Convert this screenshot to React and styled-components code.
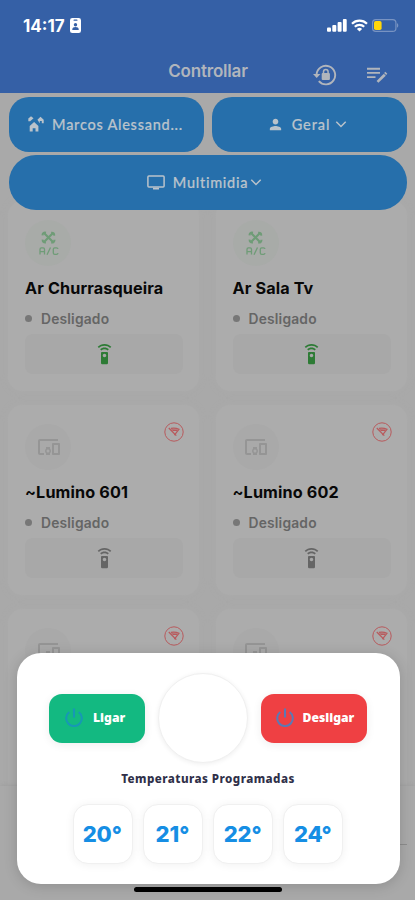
import React from 'react';
import styled, { createGlobalStyle } from 'styled-components';
import { MdDevicesOther, MdPerson, MdSettingsRemote } from 'react-icons/md';

const GlobalStyle = createGlobalStyle`
  * {
    box-sizing: border-box;
  }

  body {
    margin: 0;
    font-family: Inter, 'Liberation Sans', sans-serif;
    background-color: #a7a7a7;
  }
`;

const Screen = styled.div`
  position: relative;
  display: flex;
  flex-direction: column;
  width: 415px;
  height: 900px;
  overflow: hidden;
  background-color: #a9a9a9;
`;

const Header = styled.header`
  flex: none;
  height: 92.5px;
  background-color: #3560a6;
`;

const StatusBar = styled.div`
  display: flex;
  align-items: center;
  justify-content: space-between;
  height: 50px;
  padding: 1px 16px 0 23px;
  color: #ffffff;
`;

const Clock = styled.div`
  display: flex;
  align-items: center;
  gap: 5px;
  font-size: 17px;
  font-weight: 700;
  letter-spacing: 0;
`;

const StatusIcons = styled.div`
  display: flex;
  align-items: center;
  gap: 4px;
`;

const NavBar = styled.div`
  display: grid;
  grid-template-columns: 1fr auto 1fr;
  align-items: center;
  height: 42px;
  padding: 0 27px 0 28px;
  color: #b1b5bc;
`;

const Title = styled.h1`
  grid-column: 2;
  margin: 0;
  font-size: 17px;
  font-weight: 600;
  letter-spacing: -0.2px;
  line-height: 20px;
`;

const NavActions = styled.div`
  display: flex;
  align-items: center;
  justify-content: flex-end;
  gap: 29px;
  padding-top: 8px;
`;

const Filters = styled.div`
  position: relative;
  z-index: 1;
  flex: none;
  display: grid;
  grid-template-columns: 195px 195px;
  gap: 3.5px 8px;
  padding: 4.5px 8px 0 9px;
`;

const Pill = styled.button`
  display: flex;
  grid-column: ${({ $wide }) => ($wide ? '1 / -1' : 'auto')};
  align-items: center;
  justify-content: center;
  height: 54.5px;
  padding: 0 ${({ $shift }) => $shift || 0}px 0 0;
  border: none;
  border-radius: ${({ $wide }) => ($wide ? '27px' : '20px')};
  background-color: #266fab;
  color: #bac3cb;
  font-family: Lato, Inter, sans-serif;
  font-size: 14.5px;
  font-weight: 500;
  -webkit-text-stroke: 0.2px #bac3cb;
`;

const PillText = styled.span`
  margin: 0 ${({ $after }) => $after || 0}px 0 8px;
  letter-spacing: ${({ $spacing }) => $spacing || 0}px;
`;

const Grid = styled.main`
  display: grid;
  grid-template-columns: 191px 191px;
  grid-auto-rows: 190px;
  gap: 14px 16.5px;
  margin-top: -9px;
  padding: 0 8px;
`;

const Card = styled.section`
  padding: 20px 15px 0 17px;
  border-radius: 14px;
  background-color: #acacac;
  box-shadow: 0 0 7px #aaaaaa;
`;

const CardTop = styled.div`
  display: flex;
  align-items: flex-start;
  justify-content: space-between;
  height: 57.5px;
`;

const DeviceIcon = styled.div`
  display: flex;
  align-items: center;
  justify-content: center;
  width: 46px;
  height: 46px;
  margin-top: -1px;
  padding-left: 1.5px;
  border-radius: 50%;
  background-color: ${({ $active }) => ($active ? '#a8aba8' : '#a9a9a9')};
  color: #959595;
`;

const OfflineBadge = styled.div`
  display: flex;
  margin: -3px 0 0;
`;

const CardTitle = styled.h2`
  margin: 0;
  color: #080808;
  font-size: 16.2px;
  font-weight: 700;
  letter-spacing: 0.13px;
  line-height: 20px;
  white-space: nowrap;
`;

const Status = styled.div`
  display: flex;
  align-items: center;
  gap: 9px;
  height: 20px;
  margin-top: 10.5px;
  color: #656565;
  font-size: 13.8px;
  font-weight: 600;
  letter-spacing: 0.2px;
`;

const Dot = styled.i`
  width: 7px;
  height: 7px;
  border-radius: 50%;
  background-color: #777777;
`;

const RemoteButton = styled.button`
  display: flex;
  align-items: center;
  justify-content: center;
  width: 158px;
  height: 40px;
  margin-top: 5.5px;
  padding: 0;
  border: none;
  border-radius: 8px;
  background-color: #a8a8a8;
  color: ${({ $active }) => ($active ? '#2d7b35' : '#656565')};
`;

const TabBar = styled.footer`
  position: absolute;
  right: 0;
  bottom: 0;
  left: 0;
  display: flex;
  align-items: flex-start;
  justify-content: flex-end;
  height: 114px;
  padding: 58px 8px 0;
  background-color: #a9a9a9;
  box-shadow: 0 -1px 4px #9f9f9f;
`;

const TabMark = styled.i`
  width: 12px;
  height: 1px;
  background-color: #8d8d8d;
`;

const Sheet = styled.div`
  position: absolute;
  z-index: 2;
  right: 15.5px;
  bottom: 16px;
  left: 16.5px;
  height: 231px;
  padding-top: 20px;
  border-radius: 24px;
  background-color: #ffffff;
  box-shadow: 0 2px 14px rgba(0, 0, 0, 0.16);
`;

const PowerRow = styled.div`
  display: flex;
  align-items: center;
  gap: 13px;
  padding-left: 32.5px;
`;

const PowerButton = styled.button`
  display: flex;
  align-items: center;
  width: ${({ $width }) => $width}px;
  height: 49px;
  gap: ${({ $gap }) => $gap}px;
  padding: 0 0 1px 15.5px;
  border: none;
  border-radius: 13px;
  background-color: ${({ $color }) => $color};
  box-shadow: 0 2px 10px rgba(0, 0, 0, 0.07);
  color: #ffffff;
  font-family: 'Noto Sans', sans-serif;
  font-size: 12.2px;
  font-weight: 900;

  svg {
    color: ${({ $iconColor }) => $iconColor};
  }
`;

const Dial = styled.div`
  width: 90px;
  height: 90px;
  border: 1px solid #f0f0f0;
  border-radius: 50%;
  background-color: #ffffff;
  box-shadow: 0 1px 5px rgba(0, 0, 0, 0.07);
`;

const SheetLabel = styled.h3`
  margin: 8px 0 0;
  color: #303049;
  font-family: 'Noto Sans', sans-serif;
  font-size: 11.6px;
  font-weight: 800;
  letter-spacing: 0.45px;
  line-height: 16px;
  text-align: center;
`;

const Temperatures = styled.div`
  display: flex;
  justify-content: center;
  gap: 10.5px;
  margin-top: 17px;
`;

const Temperature = styled.button`
  width: 59.7px;
  height: 60px;
  padding: 0 1px 1px 0;
  border: 1px solid #f0f0f0;
  border-radius: 15px;
  background-color: #ffffff;
  box-shadow: 0 1px 10px rgba(0, 0, 0, 0.06);
  color: #168ee4;
  font-family: Inter, sans-serif;
  font-size: 22px;
  font-weight: 800;
  letter-spacing: -0.1px;
`;

const HomeIndicator = styled.div`
  position: absolute;
  z-index: 2;
  bottom: 8px;
  left: 134px;
  width: 148px;
  height: 5px;
  border-radius: 3px;
  background-color: #000000;
`;

const BadgeIcon = () => (
  <svg width="11" height="15" viewBox="0 0 11 15">
    <rect width="11" height="15" rx="2.3" fill="#ffffff" />
    <rect x="3.5" y="1.6" width="4" height="1.2" rx="0.6" fill="#3560a6" />
    <circle cx="5.5" cy="6.8" r="1.7" fill="#3560a6" />
    <path d="M2.3 12v-.7c0-1.5 1.4-2.2 3.2-2.2s3.2.7 3.2 2.2v.7z" fill="#3560a6" />
  </svg>
);

const SignalIcon = () => (
  <svg width="20" height="13" viewBox="0 0 20 13" fill="#ffffff">
    <rect y="8.5" width="4" height="4.2" rx="1" />
    <rect x="5.3" y="6" width="4" height="6.7" rx="1" />
    <rect x="10.6" y="3" width="4" height="9.7" rx="1" />
    <rect x="15.9" y="0" width="3.8" height="12.7" rx="1" />
  </svg>
);

const WifiIcon = () => (
  <svg width="17" height="13" viewBox="0 0 17 13" fill="none" stroke="#ffffff" strokeWidth="2.2">
    <path d="M1 4.8c4.2-4.2 10.8-4.2 15 0" />
    <path d="M3.8 7.8c2.7-2.6 6.7-2.6 9.4 0" />
    <path d="M5.9 9.9c1.5-1.4 3.7-1.4 5.2 0l-2.6 2.7z" fill="#ffffff" stroke="none" />
  </svg>
);

const BatteryIcon = () => (
  <svg width="27" height="13" viewBox="0 0 27 13">
    <rect x="0.6" y="0.6" width="23.3" height="11.8" rx="3.2" fill="none" stroke="#7893c2" strokeWidth="1.2" />
    <rect x="2" y="2" width="7.6" height="9" rx="1.8" fill="#ffd60a" />
    <path d="M25 4.3c1.7.5 1.7 3.9 0 4.4z" fill="#7893c2" />
  </svg>
);

const LockResetIcon = () => (
  <svg width="24" height="22" viewBox="0 0 24 22" fill="none" stroke="currentColor">
    <path d="M3.6 10.2a9.3 9.3 0 1 1 2.2 6.9" strokeWidth="1.9" />
    <path d="M0 10h7.4L3.7 14z" fill="currentColor" stroke="none" />
    <rect x="8.7" y="9" width="8.2" height="7" rx="1" fill="currentColor" stroke="none" />
    <path d="M10.5 9.5V7.7a2.3 2.3 0 0 1 4.6 0v1.8" strokeWidth="1.5" />
  </svg>
);

const EditListIcon = () => (
  <svg width="22" height="18" viewBox="0 0 22 18" fill="none" stroke="currentColor" strokeWidth="1.9">
    <path d="M1 2.7h13M1 6.9h13M1 11.1h8.5" />
    <path d="m11.5 15.9 7.3-7.2" strokeWidth="2.7" />
    <path d="m19.3 5.8 2 2-1.2 1.2-2-2z" fill="currentColor" stroke="none" />
  </svg>
);

const VillageIcon = () => (
  <svg width="16" height="16" viewBox="0 0 16 16" fill="currentColor">
    <path d="M.3 5.3V2.5L3 .3l2.5 2-3.3 3z" />
    <path d="M9.4 3.8 12.5.7l3.2 3.1v3.5h-1.9V5h-2v2.3z" />
    <path d="M1.7 10.1 6.1 5.9l4.3 4.2v5.4H7.5v-3.3H4.7v3.3h-3z" />
  </svg>
);

const TvIcon = () => (
  <svg width="18" height="15" viewBox="0 0 18 15" fill="none" stroke="currentColor" strokeWidth="1.5">
    <rect x="0.9" y="0.9" width="16.2" height="11.2" rx="1" />
    <path d="M6 13.6h6" strokeWidth="1.8" />
  </svg>
);

const ChevronIcon = () => (
  <svg width="12" height="7" viewBox="0 0 11 7" fill="none" stroke="currentColor" strokeWidth="1.5">
    <path d="m.8.8 4.7 4.7L10.2.8" />
  </svg>
);

const PowerIcon = () => (
  <svg width="18" height="19" viewBox="0 0 18 19" fill="none" stroke="currentColor" strokeWidth="2.1">
    <path d="M9 .5v9M4.300 4a7.800 7.800 0 1 0 9.400 0" />
  </svg>
);

const AirIcon = () => (
  <svg width="20" height="26" viewBox="0 0 20 26" fill="none" stroke="#6f9c77">
    <path d="m5 3 9 9M14 3l-9 9" strokeWidth="2.2" />
    <path d="M3.5 5.3c.2-2.6 1.6-3 3.5-2.6M12.2 2.7c2.6-.2 3.1 1.3 2.9 2.9M15.5 9.8c-.1 2.3-1.3 3-3.3 2.7M6.9 12.5c-2.5.2-3.3-1-3.2-2.9" strokeWidth="2.1" />
    <path d="M1 24.5v-5.3q0-1.4 1.4-1.4h1.7q1.4 0 1.4 1.4v5.3M1 21.6h4.5M8 24.7l3.5-7.2M19 18.9q-.2-1.1-1.5-1.1h-1.7q-1.5 0-1.5 1.5V23q0 1.4 1.5 1.4h1.7q1.3 0 1.5-1.2" strokeWidth="1.3" />
  </svg>
);

const NoSignalIcon = () => (
  <svg width="20" height="20" viewBox="0 0 20 20" fill="none" stroke="#b85a5d">
    <circle cx="10" cy="10" r="9.2" strokeWidth="1" />
    <path d="M7 6.4q4-1 8 .8L10.4 13.2" strokeWidth="1.2" />
    <path d="M4.8 6 12.3 13.6" strokeWidth="1.3" />
    <path d="M7 7.2 13.8 7.5 12.8 9H9z" fill="#b85a5d" stroke="none" />
  </svg>
);

const devices = [
  { id: 1, name: 'Ar Churrasqueira', active: true },
  { id: 2, name: 'Ar Sala Tv', active: true },
  { id: 3, name: '~Lumino 601', active: false },
  { id: 4, name: '~Lumino 602', active: false },
  { id: 5, active: false },
  { id: 6, active: false },
];

const DeviceCard = ({ name, active }) => (
  <Card>
    <CardTop>
      <DeviceIcon $active={active}>
        {active ? <AirIcon /> : <MdDevicesOther size={24} />}
      </DeviceIcon>
      {!active && (
        <OfflineBadge>
          <NoSignalIcon />
        </OfflineBadge>
      )}
    </CardTop>
    {name && (
      <>
        <CardTitle>{name}</CardTitle>
        <Status>
          <Dot />
          Desligado
        </Status>
        <RemoteButton $active={active}>
          <MdSettingsRemote size={21} />
        </RemoteButton>
      </>
    )}
  </Card>
);

const App = () => {
  return (
    <Screen>
      <GlobalStyle />
      <Header>
        <StatusBar>
          <Clock>
            14:17
            <BadgeIcon />
          </Clock>
          <StatusIcons>
            <SignalIcon />
            <WifiIcon />
            <BatteryIcon />
          </StatusIcons>
        </StatusBar>
        <NavBar>
          <Title>Controllar</Title>
          <NavActions>
            <LockResetIcon />
            <EditListIcon />
          </NavActions>
        </NavBar>
      </Header>

      <Filters>
        <Pill $shift={2}>
          <VillageIcon />
          <PillText $spacing={0.74}>Marcos Alessand...</PillText>
        </Pill>
        <Pill $shift={5}>
          <MdPerson size={17} />
          <PillText $after={5} $spacing={0.9}>Geral</PillText>
          <ChevronIcon />
        </Pill>
        <Pill $wide $shift={7}>
          <TvIcon />
          <PillText $after={2} $spacing={0.72}>Multimidia</PillText>
          <ChevronIcon />
        </Pill>
      </Filters>

      <Grid>
        {devices.map((device) => (
          <DeviceCard key={device.id} {...device} />
        ))}
      </Grid>

      <TabBar>
        <TabMark />
      </TabBar>

      <Sheet>
        <PowerRow>
          <PowerButton $width={95.5} $gap={10.5} $color="#13b981" $iconColor="#1798b5">
            <PowerIcon />
            Ligar
          </PowerButton>
          <Dial />
          <PowerButton $width={106.5} $gap={8.5} $color="#ef4043" $iconColor="#5b79b5">
            <PowerIcon />
            Desligar
          </PowerButton>
        </PowerRow>
        <SheetLabel>Temperaturas Programadas</SheetLabel>
        <Temperatures>
          {[20, 21, 22, 24].map((value) => (
            <Temperature key={value}>{value}°</Temperature>
          ))}
        </Temperatures>
      </Sheet>
      <HomeIndicator />
    </Screen>
  );
};

export default App;
